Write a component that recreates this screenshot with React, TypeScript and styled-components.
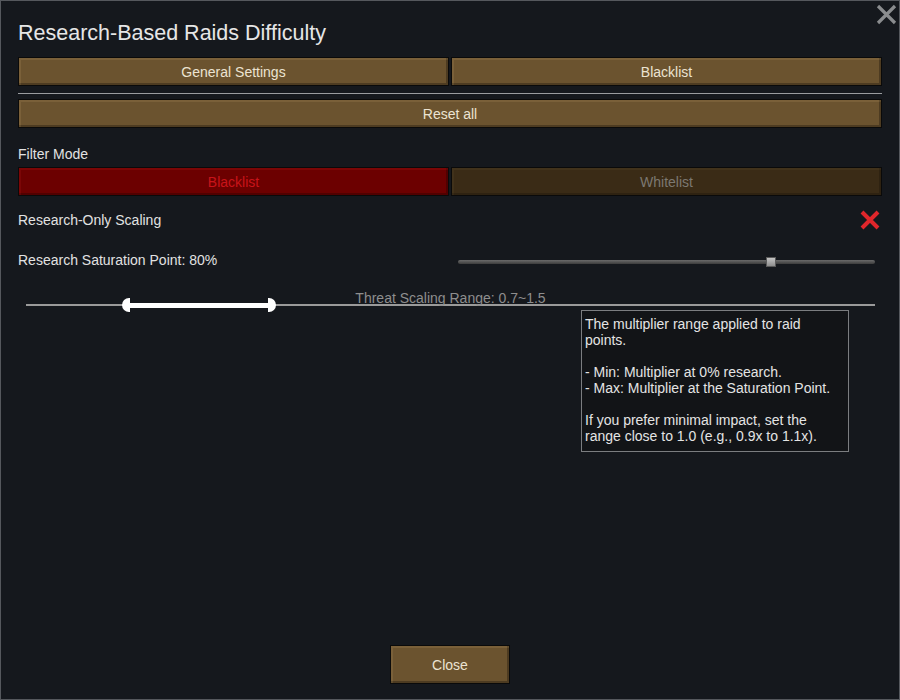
import React from "react";
import styled, { createGlobalStyle } from "styled-components";

const Global = createGlobalStyle`
  html, body { margin: 0; padding: 0; background: #15181d; }
  body { font-family: "Liberation Sans", Arial, sans-serif; }
  * { box-sizing: border-box; }
`;

const Window = styled.div`
  position: relative;
  width: 900px;
  height: 700px;
  background: #15181d;
  border: 1px solid #55585d;
  padding: 0 17px;
  display: flex;
  flex-direction: column;
  color: #e2e2e2;
`;

const Title = styled.div`
  padding-top: 20px;
  font-size: 21.5px;
  line-height: 24px;
  color: #e6e6e6;
  margin-bottom: 12px;
`;

const CloseX = styled.div`
  position: absolute;
  top: 3px;
  right: 2px;
  width: 21px;
  height: 21px;
`;

const Row = styled.div<{ $mt?: number }>`
  display: flex;
  gap: 2px;
  margin-top: ${(p) => p.$mt ?? 0}px;
`;

const Btn = styled.div<{ $variant?: "normal" | "red" | "dim"; $h?: number }>`
  flex: 1;
  height: ${(p) => p.$h ?? 29}px;
  display: flex;
  align-items: center;
  justify-content: center;
  font-size: 14px;
  border: 1px solid #0a0a0a;
  background: ${(p) =>
    p.$variant === "red" ? "#6c0000" : p.$variant === "dim" ? "#3a2b16" : "#6b532f"};
  color: ${(p) =>
    p.$variant === "red" ? "#c8141a" : p.$variant === "dim" ? "#7c7871" : "#ece3d2"};
  box-shadow: ${(p) =>
    p.$variant === "red"
      ? "inset 2px 2px 0 rgba(255,60,60,0.10), inset -2px -2px 0 rgba(0,0,0,0.25)"
      : p.$variant === "dim"
      ? "inset 2px 2px 0 rgba(255,220,150,0.04), inset -2px -2px 0 rgba(0,0,0,0.2)"
      : "inset 2px 2px 0 rgba(255,220,150,0.10), inset -2px -2px 0 rgba(0,0,0,0.28)"};
`;

const Divider = styled.div`
  height: 1px;
  background: #9a9c9f;
  margin: 7px 0 5px;
`;

const Label = styled.div<{ $mt?: number }>`
  font-size: 14px;
  line-height: 20px;
  color: #e2e2e2;
  margin-top: ${(p) => p.$mt ?? 0}px;
`;

const SettingRow = styled.div<{ $mt?: number }>`
  display: flex;
  align-items: center;
  justify-content: space-between;
  height: 30px;
  margin-top: ${(p) => p.$mt ?? 0}px;
  font-size: 14px;
  color: #e2e2e2;
`;

const SliderBox = styled.div`
  position: relative;
  width: 417px;
  height: 12px;
  margin-right: 7px;
  margin-top: 4px;
`;

const SliderTrack = styled.div`
  position: absolute;
  left: 0;
  right: 0;
  top: 4px;
  height: 4px;
  border-radius: 2px;
  background: linear-gradient(#6a6a6a, #3c3c3c);
`;

const SliderThumb = styled.div`
  position: absolute;
  top: 1px;
  width: 10px;
  height: 10px;
  background: linear-gradient(#c4c4c4, #8e8e8e);
  border: 1px solid #5a5a5a;
`;

const RangeBox = styled.div`
  position: relative;
  height: 30px;
  margin-top: 10px;
  margin-left: 8px;
  margin-right: 7px;
`;

const RangeLabel = styled.div`
  position: absolute;
  left: 0;
  right: 0;
  top: 5px;
  text-align: center;
  font-size: 14px;
  line-height: 16px;
  color: #8e8e8e;
`;

const RangeTrack = styled.div`
  position: absolute;
  left: 0;
  right: 0;
  top: 19px;
  height: 2px;
  background: #9a9a9a;
`;

const RangeFill = styled.div`
  position: absolute;
  top: 18px;
  height: 5px;
  background: #ffffff;
`;

const Handle = styled.div<{ $side: "left" | "right" }>`
  position: absolute;
  top: 13px;
  width: 8px;
  height: 14px;
  background: #ffffff;
  border-radius: ${(p) => (p.$side === "left" ? "7px 0 0 7px" : "0 7px 7px 0")};
`;

const Tooltip = styled.div`
  position: absolute;
  left: 580px;
  top: 309px;
  width: 268px;
  height: 142px;
  background: #121417;
  border: 1px solid #7b7d80;
  padding: 5px 3px;
  font-size: 14px;
  line-height: 16px;
  color: #e4e4e4;
`;

const TipLine = styled.div`
  min-height: 16px;
  white-space: nowrap;
`;

const Footer = styled.div`
  margin-top: auto;
  margin-bottom: 15px;
  display: flex;
  justify-content: center;
`;

const CloseBtn = styled(Btn)`
  flex: 0 0 120px;
`;

const RedX = () => (
  <svg width="22" height="22" viewBox="0 0 22 22" style={{ marginRight: 1 }}>
    <path d="M3 3 L19 19 M19 3 L3 19" stroke="#e0262b" strokeWidth="4" strokeLinecap="butt" />
  </svg>
);

export default function App() {
  return (
    <>
      <Global />
      <Window>
        <CloseX>
          <svg width="21" height="21" viewBox="0 0 21 21">
            <path d="M2 2 L19 19 M19 2 L2 19" stroke="#8a8c8e" strokeWidth="3.2" />
          </svg>
        </CloseX>
        <Title>Research-Based Raids Difficulty</Title>
        <Row>
          <Btn>General Settings</Btn>
          <Btn>Blacklist</Btn>
        </Row>
        <Divider />
        <Row>
          <Btn>Reset all</Btn>
        </Row>
        <Label $mt={16}>Filter Mode</Label>
        <Row $mt={3}>
          <Btn $variant="red">Blacklist</Btn>
          <Btn $variant="dim">Whitelist</Btn>
        </Row>
        <SettingRow $mt={9}>
          <span>Research-Only Scaling</span>
          <RedX />
        </SettingRow>
        <SettingRow $mt={10}>
          <span>Research Saturation Point: 80%</span>
          <SliderBox>
            <SliderTrack />
            <SliderThumb style={{ left: 308 }} />
          </SliderBox>
        </SettingRow>
        <RangeBox>
          <RangeTrack />
          <RangeLabel>Threat Scaling Range: 0.7~1.5</RangeLabel>
          <RangeFill style={{ left: 104, width: 138 }} />
          <Handle $side="left" style={{ left: 96 }} />
          <Handle $side="right" style={{ left: 242 }} />
        </RangeBox>
        <Tooltip>
          <TipLine>The multiplier range applied to raid</TipLine>
          <TipLine>points.</TipLine>
          <TipLine />
          <TipLine>- Min: Multiplier at 0% research.</TipLine>
          <TipLine>- Max: Multiplier at the Saturation Point.</TipLine>
          <TipLine />
          <TipLine>If you prefer minimal impact, set the</TipLine>
          <TipLine>range close to 1.0 (e.g., 0.9x to 1.1x).</TipLine>
        </Tooltip>
        <Footer>
          <CloseBtn $h={39}>Close</CloseBtn>
        </Footer>
      </Window>
    </>
  );
}
